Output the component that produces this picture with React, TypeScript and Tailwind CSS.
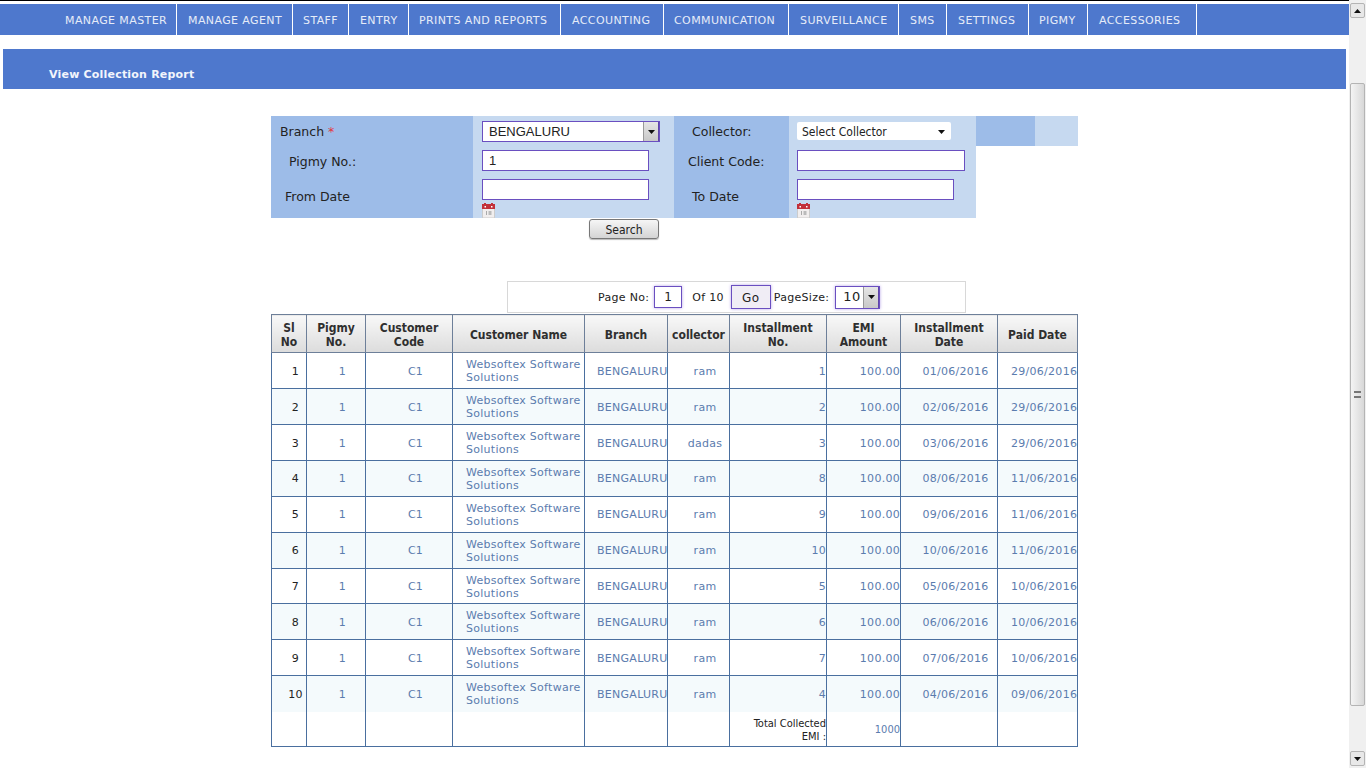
import React from "react";

const nav: [string, string][] = [
  ["MANAGE MASTER", "w-[177px] pl-[65px]"],
  ["MANAGE AGENT", "w-[116px] pl-[11px]"],
  ["STAFF", "w-[56px] pl-[10px]"],
  ["ENTRY", "w-[60px] pl-[11px]"],
  ["PRINTS AND REPORTS", "w-[152px] pl-[10px]"],
  ["ACCOUNTING", "w-[103px] pl-[11px]"],
  ["COMMUNICATION", "w-[125px] pl-[10px]"],
  ["SURVEILLANCE", "w-[110px] pl-[11px]"],
  ["SMS", "w-[48px] pl-[11px]"],
  ["SETTINGS", "w-[82px] pl-[11px]"],
  ["PIGMY", "w-[59px] pl-[10px]"],
  ["ACCESSORIES", "w-[109px] pl-[11px]"],
];

const rows = [
  ["1", "1", "01/06/2016", "29/06/2016", "ram"],
  ["2", "2", "02/06/2016", "29/06/2016", "ram"],
  ["3", "3", "03/06/2016", "29/06/2016", "dadas"],
  ["4", "8", "08/06/2016", "11/06/2016", "ram"],
  ["5", "9", "09/06/2016", "11/06/2016", "ram"],
  ["6", "10", "10/06/2016", "11/06/2016", "ram"],
  ["7", "5", "05/06/2016", "10/06/2016", "ram"],
  ["8", "6", "06/06/2016", "10/06/2016", "ram"],
  ["9", "7", "07/06/2016", "10/06/2016", "ram"],
  ["10", "4", "04/06/2016", "09/06/2016", "ram"],
];

const heads = [
  ["Sl", "No"],
  ["Pigmy", "No."],
  ["Customer", "Code"],
  ["Customer Name"],
  ["Branch"],
  ["collector"],
  ["Installment", "No."],
  ["EMI", "Amount"],
  ["Installment", "Date"],
  ["Paid Date"],
];

const widths = ["w-[35px]", "w-[59px]", "w-[87px]", "w-[132px]", "w-[83px]", "w-[62px]", "w-[97px]", "w-[74px]", "w-[97px]", "w-[80px]"];

function Arrow({ className = "" }: { className?: string }) {
  return (
    <svg width="7" height="4" viewBox="0 0 7 4" className={className}>
      <path d="M0 0h7L3.5 4z" fill="#111" />
    </svg>
  );
}

function Calendar() {
  return (
    <svg width="13" height="15" viewBox="0 0 13 15" className="block">
      <rect x="0.5" y="3" width="12" height="12" fill="#f1eeee" stroke="#ccc" />
      <rect x="0" y="1" width="13" height="5" fill="#c2303a" />
      <rect x="2" y="0" width="2" height="3" fill="#c2303a" />
      <rect x="9" y="0" width="2" height="3" fill="#c2303a" />
      <rect x="2.5" y="3" width="1.5" height="1.5" fill="#fff" />
      <rect x="9" y="3" width="1.5" height="1.5" fill="#fff" />
      <rect x="4" y="8" width="1" height="4" fill="#aaa" />
      <rect x="6.5" y="8" width="3" height="4" fill="#bbb" />
    </svg>
  );
}

const inputCls =
  "block h-[21px] border border-[#6a4fc0] bg-white px-[6px] text-[13px] text-[#222] outline-none font-['Liberation_Sans',sans-serif]";
const cond = "font-['DejaVu_Sans_Condensed','DejaVu_Sans',sans-serif]";
const cell = "border-x border-[#4a6f9f] p-0";

function Scrollbar() {
  return (
    <div className="flex h-[768px] w-[17px] shrink-0 flex-col items-center bg-[#f0f0f0] pt-[3px]">
      <div className="flex h-[15px] w-[15px] items-center justify-center rounded-[2px] border border-[#b4b4b4] bg-[#e8e8e8]">
        <Arrow className="rotate-180" />
      </div>
      <div className="mt-[65px] flex h-[623px] w-[15px] items-center justify-center rounded-[2px] border border-[#b4b4b4] bg-gradient-to-r from-[#f4f4f4] to-[#d8d8d8]">
        <div className="h-[7px] w-[7px] border-y-2 border-[#777]" />
      </div>
      <div className="mt-[45px] flex h-[15px] w-[15px] items-center justify-center rounded-[2px] border border-[#b4b4b4] bg-[#e8e8e8]">
        <Arrow />
      </div>
    </div>
  );
}

export default function App() {
  return (
    <div className="flex h-[768px] w-[1366px] overflow-hidden bg-white font-['DejaVu_Sans','Liberation_Sans',sans-serif] text-[#222]">
      <div className="w-[1349px] shrink-0">
        <div className="h-px bg-black" />
        <nav className="mt-[3px] flex h-[31px] bg-[#4e78cd]">
          {nav.map(([label, cls]) => (
            <div
              key={label}
              className={`${cls} flex items-center border-r border-white pt-[4px] text-[11px] tracking-[0.4px] whitespace-nowrap text-[#e6ecf8]`}
            >
              {label}
            </div>
          ))}
        </nav>

        <div className="mx-[3px] mt-[14px] flex h-[40px] w-[1343px] items-end bg-[#4e78cd] pb-[6px] pl-[46px] text-[11px] font-bold tracking-[0.2px] text-[#f2f5fc]">
          View Collection Report
        </div>

        <div className="mt-[27px] ml-[271px] grid w-[807px] grid-cols-[202px_201px_115px_187px_59px_43px] grid-rows-[30px_30px_42px] text-[12.5px]">
          <div className="flex items-center bg-[#9dbce8] pt-[2px] pl-[9px]">
            Branch <span className="ml-[4px] text-[#e0393e]">*</span>
          </div>
          <div className="bg-[#c6d9f0] pt-[5px] pl-[9px]">
            <div className="flex h-[21px] w-[178px] items-center justify-between border border-[#6a4fc0] bg-white pl-[6px] font-['Liberation_Sans',sans-serif] text-[13px]">
              BENGALURU
              <span className="flex h-[19px] w-[16px] items-center justify-center border-r border-l border-[#5f45a8] border-l-[#999] bg-gradient-to-b from-[#e6e6e6] to-[#c8c8c8]">
                <Arrow />
              </span>
            </div>
          </div>
          <div className="flex items-center bg-[#9dbce8] pt-[2px] pl-[18px]">Collector:</div>
          <div className="bg-[#c6d9f0] pt-[6px] pl-[8px]">
            <div className={`flex h-[18px] w-[154px] items-center justify-between rounded-[2px] bg-white pt-[1px] pr-[6px] pl-[5px] text-[12px] ${cond}`}>
              Select Collector
              <Arrow />
            </div>
          </div>
          <div className="bg-[#9dbce8]" />
          <div className="bg-[#c6d9f0]" />

          <div className="flex items-start bg-[#9dbce8] pt-[7px] pl-[18px]">Pigmy No.:</div>
          <div className="bg-[#c6d9f0] pt-[4px] pl-[9px]">
            <input readOnly value="1" aria-label="Pigmy No." className={`${inputCls} w-[167px]`} />
          </div>
          <div className="flex items-start bg-[#9dbce8] pt-[7px] pl-[14px]">Client Code:</div>
          <div className="bg-[#c6d9f0] pt-[4px] pl-[8px]">
            <input readOnly aria-label="Client Code" className={`${inputCls} w-[168px]`} />
          </div>
          <div />
          <div />

          <div className="flex items-start bg-[#9dbce8] pt-[12px] pl-[14px]">From Date</div>
          <div className="bg-[#c6d9f0] pt-[3px] pl-[9px]">
            <input readOnly aria-label="From Date" className={`${inputCls} w-[167px]`} />
            <div className="mt-[3px] h-[15px] overflow-hidden">
              <Calendar />
            </div>
          </div>
          <div className="flex items-start bg-[#9dbce8] pt-[12px] pl-[18px]">To Date</div>
          <div className="bg-[#c6d9f0] pt-[3px] pl-[8px]">
            <input readOnly aria-label="To Date" className={`${inputCls} w-[157px]`} />
            <div className="mt-[3px] h-[15px] overflow-hidden">
              <Calendar />
            </div>
          </div>
          <div />
          <div />
        </div>

        <div className="mt-[1px] ml-[589px]">
          <button className={`flex h-[20px] w-[70px] items-center justify-center rounded-[3px] border border-[#777] bg-gradient-to-b from-[#f6f6f6] to-[#d4d4d4] pt-[1px] text-[12px] text-[#222] shadow-[0_1px_1px_#bbb] ${cond}`}>
            Search
          </button>
        </div>

        <div className="mt-[42px] ml-[507px] flex h-[32px] w-[459px] items-center border border-[#d8d8d8] pl-[90px] text-[11px] tracking-[0.3px] text-[#222]">
          <span className="pt-[3px]">Page No:</span>
          <input
            readOnly
            value="1"
            aria-label="Page No"
            className="ml-[5px] h-[22px] w-[28px] border border-[#6a4fc0] bg-white text-center text-[12px] outline-none shadow-[0_0_3px_#b9a5e8]"
          />
          <span className="ml-[10px] pt-[3px]">Of 10</span>
          <button className="ml-[7px] h-[24px] w-[40px] border border-[#6a4fc0] bg-[#f0edf5] pt-[1px] text-[12px] text-[#222] shadow-[0_0_3px_#b9a5e8]">
            Go
          </button>
          <span className="ml-[3px] pt-[3px]">PageSize:</span>
          <div className="ml-[6px] flex h-[23px] w-[45px] items-center justify-between border border-[#6a4fc0] bg-white pl-[7px] text-[13px] shadow-[0_0_3px_#b9a5e8]">
            10
            <span className="flex h-[21px] w-[16px] items-center justify-center border-r border-l border-[#5f45a8] border-l-[#999] bg-gradient-to-b from-[#e6e6e6] to-[#c8c8c8]">
              <Arrow />
            </span>
          </div>
        </div>

        <table className="mt-[1px] ml-[271px] w-[807px] table-fixed border-collapse border-spacing-0 text-[11px] tracking-[0.28px] text-[#5b7cae]">
          <colgroup>
            {widths.map((w, i) => (
              <col key={i} className={w} />
            ))}
          </colgroup>
          <thead>
            <tr className="h-[38px]">
              {heads.map((h, i) => (
                <th
                  key={i}
                  className={`border border-[#6d7f99] bg-gradient-to-b from-[#f8f8f8] to-[#dcdcdc] p-0 pt-[2px] text-center text-[12px] leading-[14px] font-bold tracking-normal whitespace-nowrap text-[#2f2f2f] ${cond}`}
                >
                  {h.map((t) => (
                    <div key={t}>{t}</div>
                  ))}
                </th>
              ))}
            </tr>
          </thead>
          <tbody>
            {rows.map(([sl, inst, d1, d2, col], i) => {
              const line = i < 9 ? "border-b" : "";
              const top = i >= 3 && i <= 5 ? "pt-[1px]" : "pt-[3px]";
              const c = `${cell} ${line} ${top} pl-[13px] text-center`;
              return (
                <tr key={sl} className={`${i === 6 ? "h-[35px]" : "h-[36px]"} ${i % 2 ? "bg-[#f4fafc]" : "bg-white"}`}>
                  <td className={`${c} text-[#222]`}>{sl}</td>
                  <td className={c}>1</td>
                  <td className={c}>C1</td>
                  <td className={`${cell} ${line} ${i === 6 ? "pt-[2px]" : ""} pl-[13px] text-left leading-[13px]`}>
                    <div>Websoftex Software</div>
                    <div>Solutions</div>
                  </td>
                  <td className={`${cell} ${line} ${top} overflow-hidden pl-[12px] text-left whitespace-nowrap`}>BENGALURU</td>
                  <td className={c}>{col}</td>
                  <td className={`${cell} ${line} ${top} text-right`}>{inst}</td>
                  <td className={`${cell} ${line} ${top} text-right`}>100.00</td>
                  <td className={c}>{d1}</td>
                  <td className={`${c} whitespace-nowrap`}>{d2}</td>
                </tr>
              );
            })}
            <tr className="h-[35px]">
              <td className={`${cell} border-b`} />
              <td className={`${cell} border-b`} />
              <td className={`${cell} border-b`} />
              <td className={`${cell} border-b`} />
              <td className={`${cell} border-b`} />
              <td className={`${cell} border-b`} />
              <td className={`${cell} border-b pt-[2px] text-right text-[11px] leading-[13px] tracking-normal text-[#222] ${cond}`}>
                <div>Total Collected</div>
                <div>EMI :</div>
              </td>
              <td className={`${cell} border-b pt-[2px] text-right text-[11px] tracking-normal ${cond}`}>1000</td>
              <td className={`${cell} border-b`} />
              <td className={`${cell} border-b`} />
            </tr>
          </tbody>
        </table>
      </div>
      <Scrollbar />
    </div>
  );
}
